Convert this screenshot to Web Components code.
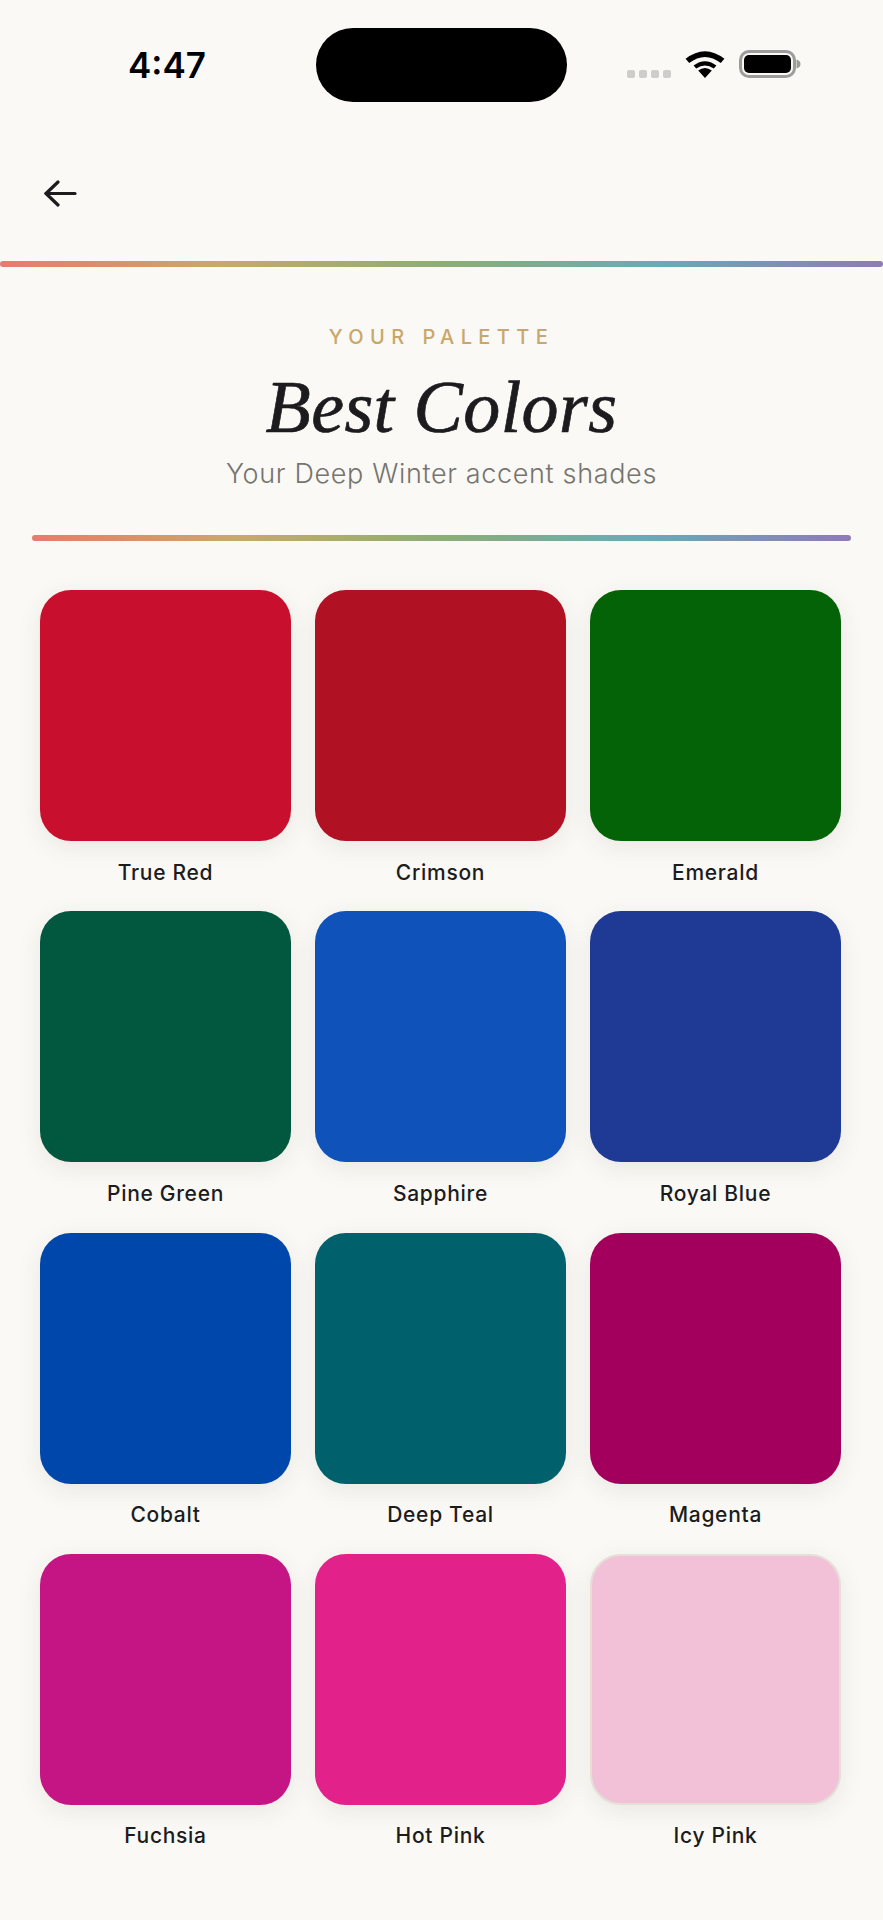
<!DOCTYPE html>
<html lang="en">
<head>
<meta charset="utf-8">
<title>Best Colors</title>
<style>
  html, body { margin: 0; padding: 0; background: #faf9f5; }
  body { font-family: "Inter", "Liberation Sans", sans-serif; color: #1c1c1e; }
</style>
</head>
<body>

<palette-page>
  <status-bar slot="top" time="4:47"></status-bar>
  <back-nav slot="top"></back-nav>
  <rainbow-rule slot="top"></rainbow-rule>
  <palette-header eyebrow="YOUR PALETTE" heading="Best Colors" sub="Your Deep Winter accent shades"></palette-header>
  <rainbow-rule inset></rainbow-rule>
  <swatch-grid>
    <color-swatch color="#c8102e">True Red</color-swatch>
    <color-swatch color="#b01224">Crimson</color-swatch>
    <color-swatch color="#046307">Emerald</color-swatch>
    <color-swatch color="#01583f">Pine Green</color-swatch>
    <color-swatch color="#0f52ba">Sapphire</color-swatch>
    <color-swatch color="#1e3a94">Royal Blue</color-swatch>
    <color-swatch color="#0047ab">Cobalt</color-swatch>
    <color-swatch color="#00616c">Deep Teal</color-swatch>
    <color-swatch color="#a3005e">Magenta</color-swatch>
    <color-swatch color="#c51585">Fuchsia</color-swatch>
    <color-swatch color="#e2228a">Hot Pink</color-swatch>
    <color-swatch color="#f3c1d7" outlined>Icy Pink</color-swatch>
  </swatch-grid>
</palette-page>

<script>
// Page shell: top bars first, then the content
class PalettePage extends HTMLElement {
  constructor() {
    super();
    this.attachShadow({ mode: 'open' });
    this.shadowRoot.innerHTML = `
      <style>
        :host { display: block; min-height: 1920px; background: #faf9f5; }
      </style>
      <slot name="top"></slot>
      <slot></slot>
    `;
  }
}

class StatusBar extends HTMLElement {
  constructor() {
    super();
    this.attachShadow({ mode: 'open' });
  }

  connectedCallback() {
    const time = this.getAttribute('time') || '';
    this.shadowRoot.innerHTML = `
      <style>
        :host {
          display: grid;
          grid-template-columns: 316px 251px 1fr;
          align-items: center;
          padding-top: 28px;
          height: 74px;
        }
        .time {
          padding-left: 128px;
          font: 600 35px/40px "Inter", "Liberation Sans", sans-serif;
          color: #000;
        }
        .island { height: 74px; border-radius: 37px; background: #000; }
        .icons {
          display: flex;
          align-items: flex-start;
          padding-left: 60px;
          height: 28px;
          margin-top: -2px;
        }
        .cell { display: flex; gap: 4px; margin-top: 20px; margin-right: 14px; }
        .cell i { width: 8px; height: 8px; border-radius: 2px; background: #cdcdcb; }
        svg { display: block; }
      </style>
      <div class="time">${time}</div>
      <div class="island"></div>
      <div class="icons">
        <div class="cell"><i></i><i></i><i></i><i></i></div>
        <svg width="40" height="28" viewBox="0 0 40 28" style="margin-right:14px">
          <path d="M20 28 L13.2 20.6 Q20 15.6 26.8 20.6 Z" fill="#000"/>
          <path d="M8.6 15.6 L11.2 18.6 Q20 12.2 28.8 18.6 L31.4 15.6 Q20 6.8 8.6 15.6 Z" fill="#000"/>
          <path d="M0.6 8.8 L4.2 13 Q20 1 35.8 13 L39.4 8.8 Q20 -6.4 0.6 8.8 Z" fill="#000"/>
        </svg>
        <svg width="63" height="28" viewBox="0 0 63 28">
          <rect x="1.5" y="1.5" width="54" height="25" rx="8.5" fill="none" stroke="#9c9c9c" stroke-width="3"/>
          <rect x="5" y="5" width="47" height="18" rx="5" fill="#000"/>
          <path d="M57.5 9.5 q4 1 4 4.5 t-4 4.5 Z" fill="#9c9c9c"/>
        </svg>
      </div>
    `;
  }
}

class BackNav extends HTMLElement {
  constructor() {
    super();
    this.attachShadow({ mode: 'open' });
    this.shadowRoot.innerHTML = `
      <style>
        :host { display: block; height: 159px; padding: 78px 0 0 44px; box-sizing: border-box; }
        svg { display: block; }
      </style>
      <svg width="33" height="27" viewBox="0 0 33 27" fill="none" stroke="#1c1c1e"
           stroke-width="3.2" stroke-linecap="round" stroke-linejoin="round" aria-label="Back">
        <path d="M31 13.5 H2"/>
        <path d="M14 2 L2 13.5 L14 25"/>
      </svg>
    `;
  }
}

// Gradient line, full width or inset with the "inset" attribute
class RainbowRule extends HTMLElement {
  constructor() {
    super();
    this.attachShadow({ mode: 'open' });
    this.shadowRoot.innerHTML = `
      <style>
        :host { display: block; }
        :host([inset]) { margin: 0 32px; }
        div {
          height: 6px;
          border-radius: 3px;
          background: linear-gradient(90deg, #e97a6e 0%, #c9a86c 25%, #8bae74 50%, #6aa9b8 75%, #8f7bb3 100%);
        }
      </style>
      <div></div>
    `;
  }
}

class PaletteHeader extends HTMLElement {
  constructor() {
    super();
    this.attachShadow({ mode: 'open' });
  }

  connectedCallback() {
    this.shadowRoot.innerHTML = `
      <style>
        :host { display: block; text-align: center; padding: 58px 0 44px; }
        .eyebrow {
          font: 500 20px/24px "Inter", "Liberation Sans", sans-serif;
          letter-spacing: 6.4px;
          color: #c9a76b;
        }
        h1 {
          margin: 18px 0 0;
          font: italic 400 74px/80px "Liberation Serif", serif;
          letter-spacing: 0.4px;
          -webkit-text-stroke: 0.7px #1c1c1e;
          color: #1c1c1e;
        }
        p {
          margin: 10px 0 0;
          font: 300 27px/34px "Inter", "Liberation Sans", sans-serif;
          letter-spacing: 0.65px;
          color: #76746f;
        }
      </style>
      <div class="eyebrow">${this.getAttribute('eyebrow')}</div>
      <h1>${this.getAttribute('heading')}</h1>
      <p>${this.getAttribute('sub')}</p>
    `;
  }
}

class SwatchGrid extends HTMLElement {
  constructor() {
    super();
    this.attachShadow({ mode: 'open' });
    this.shadowRoot.innerHTML = `
      <style>
        :host {
          display: grid;
          grid-template-columns: repeat(3, 251px);
          column-gap: 24px;
          row-gap: 22.8px;
          padding: 49px 0 0 40px;
        }
      </style>
      <slot></slot>
    `;
  }
}

class ColorSwatch extends HTMLElement {
  constructor() {
    super();
    this.attachShadow({ mode: 'open' });
  }

  connectedCallback() {
    this.shadowRoot.innerHTML = `
      <style>
        :host { display: block; text-align: center; }
        .chip {
          aspect-ratio: 1;
          box-sizing: border-box;
          border-radius: 31px;
          background: ${this.getAttribute('color')};
          box-shadow: 0 6px 24px rgba(60, 50, 40, 0.09);
        }
        :host([outlined]) .chip { border: 2px solid #e6dfd8; }
        .name {
          margin-top: 15.5px;
          font: 500 21px/32px "Inter", "Liberation Sans", sans-serif;
          letter-spacing: 0.7px;
          color: #1c1c1e;
        }
      </style>
      <div class="chip"></div>
      <div class="name"><slot></slot></div>
    `;
  }
}

customElements.define('palette-page', PalettePage);
customElements.define('status-bar', StatusBar);
customElements.define('back-nav', BackNav);
customElements.define('rainbow-rule', RainbowRule);
customElements.define('palette-header', PaletteHeader);
customElements.define('swatch-grid', SwatchGrid);
customElements.define('color-swatch', ColorSwatch);
</script>
</body>
</html>
